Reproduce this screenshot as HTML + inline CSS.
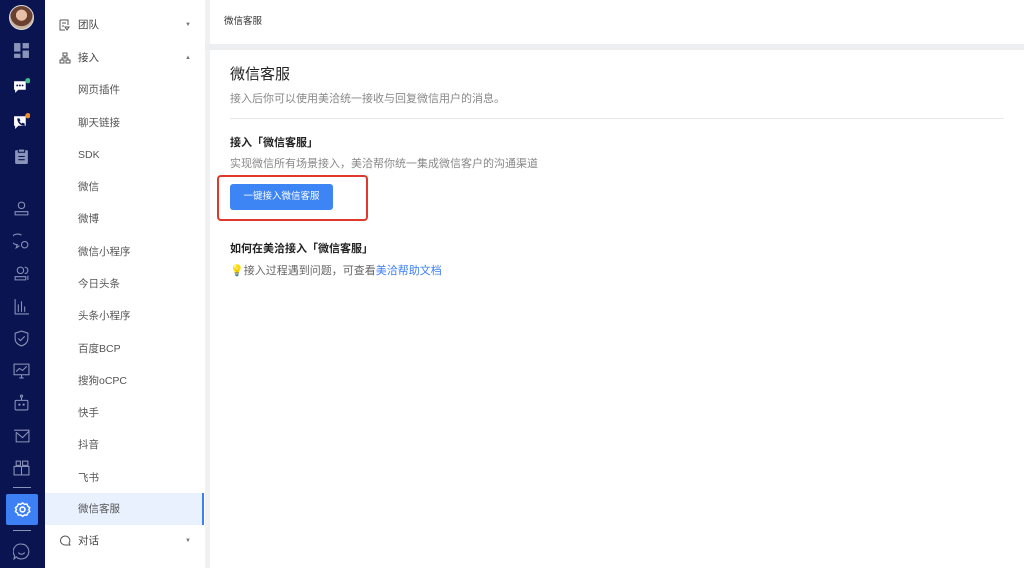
<!DOCTYPE html>
<html><head><meta charset="utf-8"><style>
*{margin:0;padding:0;box-sizing:border-box}
body{width:1024px;height:568px;overflow:hidden;background:#fff;font-family:"Liberation Sans","Noto Sans CJK SC",sans-serif;position:relative}
.side{position:absolute;left:0;top:0;width:45px;height:568px;background:#0a1450}
.ic{position:absolute;left:13px;width:17px;height:17px}
.menu{position:absolute;left:45px;top:0;width:160px;height:568px;background:#fff}
.mi{position:absolute;left:0;width:158px;height:32px;line-height:32px;font-size:10.5px;color:#555;padding-left:33px}
.mi.top{padding-left:33px;color:#444}
.arr{position:absolute;right:12px;top:0;font-size:6px;color:#777}
.sep{position:absolute;left:205px;top:0;width:5px;height:568px;background:#f0f1f3}
.hdr{position:absolute;left:210px;top:0;width:814px;height:44px;background:#fff;font-size:9.5px;color:#333;padding:13px 0 0 14px}
.band{position:absolute;left:205px;top:44px;width:819px;height:6px;background:#eceef0}
.main{position:absolute;left:230px;top:49px;width:780px}
</style></head><body>
<div class="side">
  <div style="position:absolute;left:9px;top:5px;width:25px;height:25px;border-radius:50%;background:radial-gradient(circle at 50% 40%,#e8c0a8 0 30%,#6a4030 32% 60%,#c9b2a0 62%);border:1.5px solid #ddd"></div>
  <svg class="ic" style="top:42px" viewBox="0 0 16 16"><rect x="1" y="1" width="6" height="8" fill="#8a93b8"/><rect x="9" y="1" width="6" height="5" fill="#8a93b8"/><rect x="1" y="11" width="6" height="4" fill="#8a93b8"/><rect x="9" y="8" width="6" height="7" fill="#8a93b8"/></svg>
  <svg class="ic" style="top:78px" viewBox="0 0 16 16"><path d="M1 3h11v8H5l-3 3v-3H1z" fill="#fff"/><circle cx="4" cy="7" r=".9" fill="#0a1450"/><circle cx="6.5" cy="7" r=".9" fill="#0a1450"/><circle cx="9" cy="7" r=".9" fill="#0a1450"/><circle cx="14" cy="2.5" r="2.5" fill="#3cc08a"/></svg>
  <svg class="ic" style="top:113px" viewBox="0 0 16 16"><path d="M1 3h11v9H5l-3 3v-3H1z" fill="#fff"/><path d="M4 5l2 0 1 2-1 1 2 2 1-1 2 1v2c-4 0-7-3-7-7z" fill="#0a1450"/><circle cx="14" cy="2.5" r="2.5" fill="#f08a2c"/></svg>
  <svg class="ic" style="top:148px" viewBox="0 0 16 16"><rect x="2" y="2" width="12" height="13" rx="1" fill="#8a93b8"/><rect x="5" y="1" width="6" height="3" fill="#8a93b8" stroke="#0a1450"/><path d="M5 8h6M5 11h6" stroke="#0a1450"/></svg>
  <svg class="ic" style="top:200px" viewBox="0 0 16 16" fill="none" stroke="#8a93b8"><circle cx="8" cy="5" r="3"/><path d="M2 14v-3h12v3z"/></svg>
  <svg class="ic" style="top:233px" viewBox="0 0 16 16" fill="none" stroke="#8a93b8"><path d="M8 2a6 5 0 1 0-4 9l-1 3 3-2"/><circle cx="11" cy="11" r="3"/></svg>
  <svg class="ic" style="top:265px" viewBox="0 0 16 16" fill="none" stroke="#8a93b8"><circle cx="7" cy="5" r="3"/><path d="M2 14v-3h10v3z"/><path d="M11 2a3 3 0 0 1 0 6M14 10v4"/></svg>
  <svg class="ic" style="top:298px" viewBox="0 0 16 16" fill="none" stroke="#8a93b8"><path d="M2 1v14h13M5 13V6M8 13V3M11 13V8"/></svg>
  <svg class="ic" style="top:330px" viewBox="0 0 16 16" fill="none" stroke="#8a93b8"><path d="M8 1l6 2v5c0 4-3 6-6 7-3-1-6-3-6-7V3z"/><path d="M5 8l2 2 4-4"/></svg>
  <svg class="ic" style="top:362px" viewBox="0 0 16 16" fill="none" stroke="#8a93b8"><rect x="1" y="2" width="14" height="10"/><path d="M3 9l3-3 3 2 4-4M6 15h4M8 12v3"/></svg>
  <svg class="ic" style="top:394px" viewBox="0 0 16 16" fill="none" stroke="#8a93b8"><rect x="2" y="6" width="12" height="9" rx="1"/><path d="M8 6V3"/><circle cx="8" cy="2" r="1"/><circle cx="6" cy="10" r=".6"/><circle cx="10" cy="10" r=".6"/></svg>
  <svg class="ic" style="top:427px" viewBox="0 0 16 16" fill="none" stroke="#8a93b8"><path d="M1 3h14v11H3V5"/><path d="M3 5l6 5 6-6"/></svg>
  <svg class="ic" style="top:459px" viewBox="0 0 16 16" fill="none" stroke="#8a93b8"><rect x="1" y="7" width="14" height="8"/><rect x="3" y="2" width="4" height="4"/><rect x="9" y="2" width="5" height="4"/><path d="M8 7v8"/></svg>
  <div style="position:absolute;left:13px;top:487px;width:18px;height:1px;background:#8a93b8"></div>
  <div style="position:absolute;left:6px;top:494px;width:32px;height:31px;background:#3d7ff5;border-radius:2px"></div>
  <svg class="ic" style="top:501px;left:14px" viewBox="0 0 16 16" fill="none" stroke="#fff" stroke-width="1.5"><path d="M8 1l2 1.5 2.5-.3 1 2.3 2 1.5-1 2 1 2-2 1.5-1 2.3-2.5-.3L8 15l-2-1.5-2.5.3-1-2.3-2-1.5 1-2-1-2 2-1.5 1-2.3 2.5.3z" transform="scale(.9) translate(1,1)"/><circle cx="8" cy="8" r="2.3"/></svg>
  <div style="position:absolute;left:13px;top:530px;width:18px;height:1px;background:#8a93b8"></div>
  <svg class="ic" style="top:543px" viewBox="0 0 16 16" fill="none" stroke="#8a93b8"><path d="M8 1a7 7 0 1 1-5 12l-2 2 .5-3A7 7 0 0 1 8 1z"/><path d="M5 9c1.5 2 4.5 2 6 0"/></svg>
</div>
<div class="menu">
  <div class="mi top" style="top:9px"><svg style="position:absolute;left:14px;top:10px" width="11" height="12" viewBox="0 0 11 12" fill="none" stroke="#555"><path d="M1 1h8v5M1 1v10h5M3 4h4M3 7h2"/><path d="M6 8h4l-2 3z"/></svg>团队<span class="arr">▼</span></div>
  <div class="mi top" style="top:42px"><svg style="position:absolute;left:14px;top:10px" width="12" height="12" viewBox="0 0 12 12" fill="none" stroke="#555"><rect x="4" y="1" width="4" height="3"/><rect x="1" y="8" width="4" height="3"/><rect x="7" y="8" width="4" height="3"/><path d="M6 4v2H3v2M6 6h3v2"/></svg>接入<span class="arr">▲</span></div>
  <div class="mi" style="top:74px">网页插件</div>
  <div class="mi" style="top:107px">聊天链接</div>
  <div class="mi" style="top:139px">SDK</div>
  <div class="mi" style="top:171px">微信</div>
  <div class="mi" style="top:203px">微博</div>
  <div class="mi" style="top:236px">微信小程序</div>
  <div class="mi" style="top:268px">今日头条</div>
  <div class="mi" style="top:300px">头条小程序</div>
  <div class="mi" style="top:333px">百度BCP</div>
  <div class="mi" style="top:365px">搜狗oCPC</div>
  <div class="mi" style="top:397px">快手</div>
  <div class="mi" style="top:429px">抖音</div>
  <div class="mi" style="top:462px">飞书</div>
  <div class="mi" style="top:493px;background:#e8f1fd;border-right:2px solid #3d7ff5;width:159px">微信客服</div>
  <div class="mi top" style="top:525px"><svg style="position:absolute;left:14px;top:10px" width="12" height="12" viewBox="0 0 12 12" fill="none" stroke="#555"><path d="M6 1a5 4.5 0 1 0 1 9h4l-1-2a5 4.5 0 0 0-4-7z"/></svg>对话<span class="arr">▼</span></div>
</div>
<div class="sep"></div>
<div class="hdr">微信客服</div>
<div class="band"></div>
<div class="main">
  <div style="position:absolute;top:14px;font-size:15px;color:#222">微信客服</div>
  <div style="position:absolute;top:41px;font-size:11px;color:#888">接入后你可以使用美洽统一接收与回复微信用户的消息。</div>
  <div style="position:absolute;top:69px;left:0;width:774px;height:1px;background:#e8e8e8"></div>
  <div style="position:absolute;top:85px;font-size:11px;color:#222;font-weight:bold">接入「微信客服」</div>
  <div style="position:absolute;top:106px;font-size:11px;color:#888">实现微信所有场景接入，美洽帮你统一集成微信客户的沟通渠道</div>
  <div style="position:absolute;top:126px;left:-13px;width:151px;height:46px;border:2px solid #e0392b;border-radius:4px"></div>
  <div style="position:absolute;top:135px;left:0;width:103px;height:26px;background:#3d85f5;border-radius:3px;color:#fff;font-size:9.5px;text-align:center;line-height:26px">一键接入微信客服</div>
  <div style="position:absolute;top:191px;font-size:11px;color:#222;font-weight:bold">如何在美洽接入「微信客服」</div>
  <div style="position:absolute;top:213px;font-size:11px;color:#666"><span style="color:#f3c94a">💡</span>接入过程遇到问题，可查看<span style="color:#3d7ff5">美洽帮助文档</span></div>
</div>
</body></html>
